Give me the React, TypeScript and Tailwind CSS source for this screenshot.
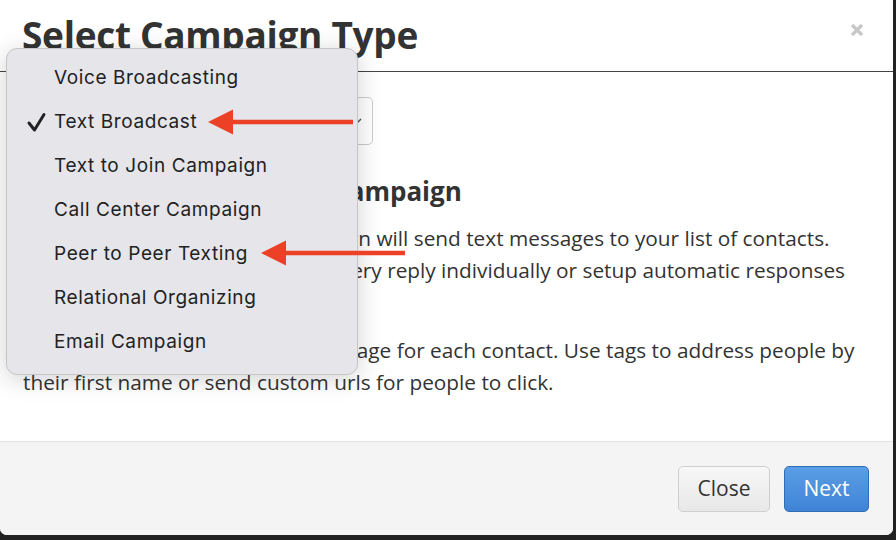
import React from "react";

const menuItems = [
  "Voice Broadcasting",
  "Text Broadcast",
  "Text to Join Campaign",
  "Call Center Campaign",
  "Peer to Peer Texting",
  "Relational Organizing",
  "Email Campaign",
];

function Arrow({ x1, x2, y }: { x1: number; x2: number; y: number }) {
  const headLen = 25;
  const half = 12.5;
  return (
    <g fill="#ec4127" stroke="none">
      <rect x={x2 + headLen - 1} y={y - 2.25} width={x1 - x2 - headLen + 1} height={4.5} />
      <polygon points={`${x2},${y} ${x2 + headLen},${y - half} ${x2 + headLen},${y + half}`} />
    </g>
  );
}

export default function App() {
  return (
    <div
      className="relative w-[896px] h-[540px] overflow-hidden bg-[#222222]"
      style={{ fontFamily: '"Open Sans", "Liberation Sans", sans-serif' }}
    >
      <div className="w-[893px] h-[535px] bg-white rounded-b-[7px] flex flex-col overflow-hidden">
        {/* header */}
        <div className="h-[72px] shrink-0 border-b border-[#444] flex items-start justify-between pl-[22px] pr-[29px]">
          <h2 className="text-[37px] leading-none font-bold text-[#333] mt-[16px] tracking-[-0.3px]">
            Select Campaign Type
          </h2>
          <svg className="mt-[23px]" width="14" height="14" viewBox="0 0 14 14">
            <path d="M2 2 L12 12 M12 2 L2 12" stroke="#c8c8c8" strokeWidth="3.4" strokeLinecap="butt" />
          </svg>
        </div>
        {/* body */}
        <div className="flex-1 px-[23px] pt-[25px] text-[#333]">
          <div className="w-[350px] h-[48px] border border-[#ccc] rounded-[5px] flex items-center justify-end pr-[10px]">
            <svg width="10" height="10" viewBox="0 0 10 10">
              <path d="M1 3 L5 7 L9 3" stroke="#555" strokeWidth="1.5" fill="none" />
            </svg>
          </div>
          <h4 className="mt-[29px] text-[26px] font-bold leading-[34px] text-[#333] whitespace-nowrap">
            About a Text Broadcast Campaign
          </h4>
          <div className="mt-[14px] text-[20.8px] leading-[32px] text-[#333]">
            <div className="whitespace-nowrap">Creating a Text Broadcast campaign will send text messages to your list of contacts.</div>
            <div className="whitespace-nowrap">Contacts can reply, you will see every reply individually or setup automatic responses</div>
            <div className="whitespace-nowrap">to keywords.</div>
          </div>
          <div className="mt-[16px] text-[20.8px] leading-[32px] text-[#333]">
            <div className="whitespace-nowrap">You can write a personalized message for each contact. Use tags to address people by</div>
            <div className="whitespace-nowrap">their first name or send custom urls for people to click.</div>
          </div>
        </div>
        {/* footer */}
        <div className="h-[94px] shrink-0 border-t border-[#e0e0e0] bg-[#f4f4f4] flex items-center justify-end gap-[14px] pr-[24px]">
          <button className="w-[92px] h-[46px] rounded-[5px] border border-[#cfcfcf] bg-gradient-to-b from-[#f7f7f7] to-[#e8e8e8] text-[21px] text-[#333]">
            Close
          </button>
          <button className="w-[85px] h-[46px] rounded-[5px] border border-[#2f6db5] bg-gradient-to-b from-[#5a9ee6] to-[#3f83d6] text-[21px] text-white">
            Next
          </button>
        </div>
      </div>

      {/* dropdown menu */}
      <div
        className="absolute left-[6px] top-[48px] w-[352px] h-[327px] rounded-[11px] bg-[#e5e5ea] border border-[#c6c6c8] shadow-[0_4px_24px_rgba(0,0,0,0.18)] pt-[7px]"
        style={{ fontFamily: 'Inter, "Noto Sans", sans-serif' }}
      >
        {menuItems.map((item, i) => (
          <div key={item} className="h-[44px] flex items-center relative">
            {i === 1 && (
              <svg className="absolute left-[19px] top-[11px]" width="22" height="22" viewBox="0 0 22 22">
                <path d="M3 12 L8.5 19 L18 3.5" stroke="#222" strokeWidth="3" fill="none" strokeLinecap="round" strokeLinejoin="round" />
              </svg>
            )}
            <span className="pl-[47px] text-[19px] tracking-[0.6px] text-[#222]">{item}</span>
          </div>
        ))}
      </div>

      {/* annotation arrows */}
      <svg className="absolute left-0 top-0 pointer-events-none" width="896" height="540">
        <Arrow x1={353} x2={208} y={122} />
        <Arrow x1={405} x2={261} y={253} />
      </svg>
    </div>
  );
}
